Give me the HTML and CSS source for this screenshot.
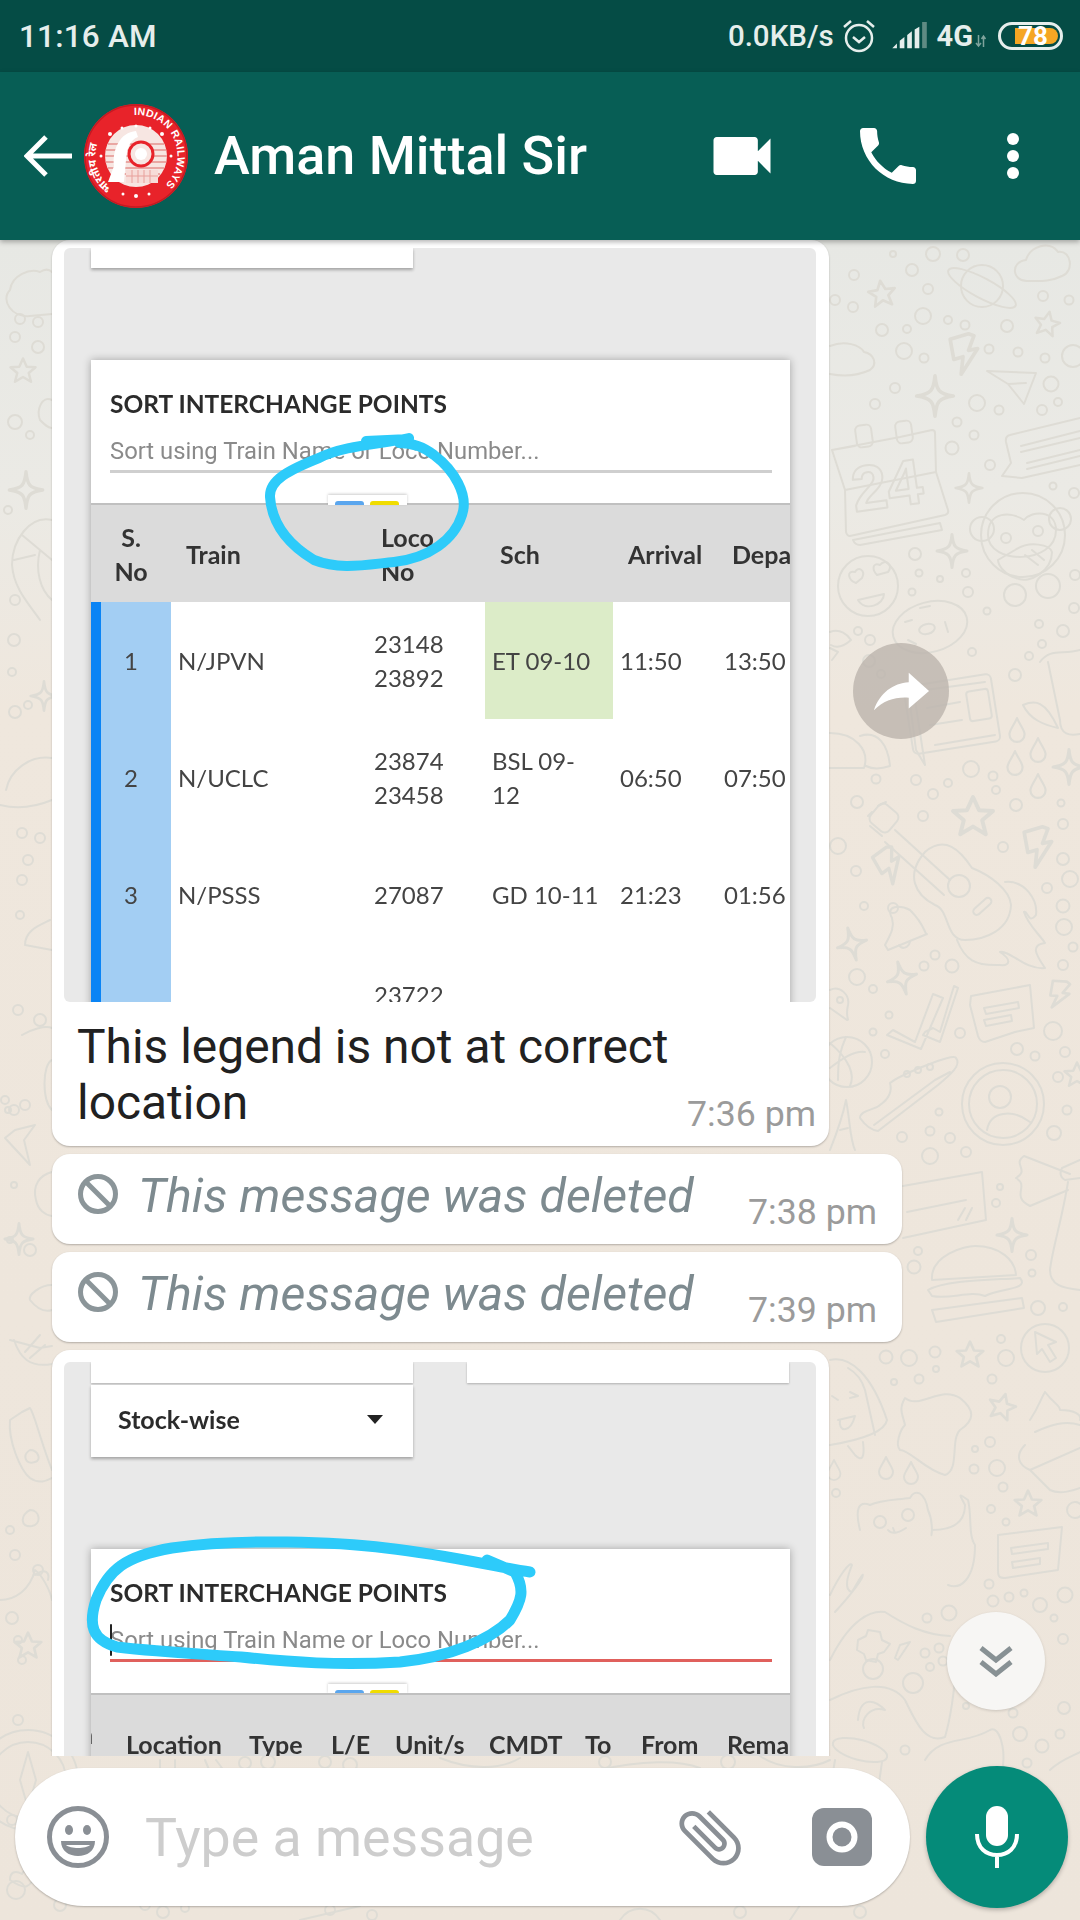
FILE: index.html
```html
<!DOCTYPE html>
<html lang="en">
<head>
<meta charset="utf-8">
<title>Aman Mittal Sir</title>
<link rel="stylesheet" href="styles.css">
</head>
<body>
<svg class="defs" width="0" height="0" aria-hidden="true">
  <defs>
    <symbol id="star" viewBox="-12 -12 24 24" overflow="visible"><path d="M0-10 3-3.4 10-3 4.6 1.6 6.4 8.6 0 4.8-6.4 8.6-4.6 1.6-10-3-3-3.4Z"/></symbol>
    <symbol id="spark" viewBox="-12 -12 24 24" overflow="visible"><path d="M0-11C.8-3 2-1.200 10 0 2 1.200.8 3 0 11-.8 3-2 1.200-10 0-2-1.200-.8-3 0-11Z"/></symbol>
    <symbol id="bolt" viewBox="-12 -12 24 24" overflow="visible"><path d="M3-11-7-8-5 3 0 1.500-1 11 8-3 3-2 6-10Z"/></symbol>
    <symbol id="drop" viewBox="-12 -12 24 24" overflow="visible"><path d="M0-11C3-4 7 0 7 4A7 7 0 0 1-7 4C-7 0-3-4 0-11Z"/></symbol>
  </defs>
</svg>
<main class="screen">
  <div class="status">
    <span class="clock">11:16 AM</span>
    <div class="status-right">
      <span class="speed">0.0KB/s</span>
      <svg class="ico-alarm" viewBox="0 0 34 34"><circle cx="17" cy="19" r="13"/><path d="M11 18l6 5 6-5M2 8l7-6M32 8l-7-6"/></svg>
      <svg class="ico-signal" viewBox="0 0 40 30"><path class="bar" d="M1 28h5v-5zM9 28h5V16l-5 4zM17 28h5V10l-5 4zM25 28h5V5l-5 3z"/><path class="bar-off" d="M33 28h5V0h-5z"/></svg>
      <span class="net">4G</span>
      <svg class="ico-arrows" viewBox="0 0 12 14"><path d="M3.500 1v11M1 9l2.500 3L6 9M8.500 13V2M6.500 5l2-3 2 3"/></svg>
      <div class="battery"><span class="battery-fill"></span><span class="battery-num">78</span></div>
    </div>
  </div>

  <header class="appbar">
    <svg class="ico-back" viewBox="0 0 48 42"><path d="M48 21H4M22 2 3 21l19 19"/></svg>
    <svg class="logo" viewBox="0 0 104 104">
      <circle cx="52" cy="52" r="52" fill="#e8232a"/>
      <circle cx="52" cy="52" r="51" fill="none" stroke="#c41a22" stroke-width="1.500"/>
      <defs>
        <path id="arc-en" d="M50 11A41 41 0 0 1 72 88"/>
        <path id="arc-hi" d="M28 84A40 40 0 0 1 46 12"/>
      </defs>
      <text class="logo-text"><textPath href="#arc-en">INDIAN RAILWAYS</textPath></text>
      <text class="logo-hi"><textPath href="#arc-hi">भारतीय रेल</textPath></text>
      <circle cx="52" cy="52" r="31" fill="#f7e6e2"/>
      <path d="M24 40H80M22 46H82M21 52H83M22 58H82M24 64H80M28 70H76" stroke="#e9a7a3" stroke-width="2"/>
      <path d="M52 27C36 28 28 46 30 62L24 78 40 78 42 56C43 44 46 36 54 33Z" fill="#fff"/>
      <circle cx="57" cy="50" r="12" fill="#f7e6e2" stroke="#e8232a" stroke-width="3"/>
      <circle cx="57" cy="50" r="6" fill="#fff"/>
      <path d="M42 66H74V79H42Z" fill="#f7dcd8"/>
      <path d="M48 66V79M54 66V79M60 66V79M66 66V79M42 72H74" stroke="#e8a09b" stroke-width="1"/>
      <g fill="#fff"><circle cx="26" cy="30" r="2"/><circle cx="78" cy="30" r="2"/><circle cx="87" cy="52" r="1.500"/><circle cx="17" cy="52" r="1.500"/><circle cx="52" cy="92" r="2"/><circle cx="65" cy="90" r="1.500"/><circle cx="39" cy="90" r="1.500"/><circle cx="52" cy="22" r="1.500"/><circle cx="66" cy="24" r="1.500"/><circle cx="38" cy="24" r="1.500"/></g>
    </svg>
    <h1 class="name">Aman Mittal Sir</h1>
    <div class="actions">
      <svg class="ico-video" viewBox="3 6 18 12"><path d="M17 10.500V7c0-.55-.45-1-1-1H4c-.55 0-1 .45-1 1v10c0 .55.45 1 1 1h12c.55 0 1-.45 1-1v-3.500l4 4v-11l-4 4z"/></svg>
      <svg class="ico-phone" viewBox="3 3 18 18"><path d="M6.620 10.790c1.440 2.830 3.760 5.140 6.590 6.590l2.200-2.200c.27-.27.67-.36 1.020-.24 1.120.37 2.330.57 3.570.57.55 0 1 .45 1 1V20c0 .55-.45 1-1 1-9.390 0-17-7.610-17-17 0-.55.45-1 1-1h3.500c.55 0 1 .45 1 1 0 1.250.2 2.450.57 3.570.11.35.03.74-.25 1.020l-2.200 2.200z"/></svg>
      <div class="dots"><i></i><i></i><i></i></div>
    </div>
  </header>

  <section class="chat">
    <svg class="doodles" viewBox="0 240 1080 1680" aria-hidden="true">
      <g class="dc">
        <circle cx="893" cy="254" r="3"/><circle cx="933" cy="254" r="7"/><circle cx="963" cy="255" r="6"/><circle cx="854" cy="275" r="5"/><circle cx="912" cy="270" r="6"/><circle cx="928" cy="289" r="5"/><circle cx="853" cy="307" r="5"/><circle cx="835" cy="300" r="5"/><circle cx="923" cy="316" r="8"/><circle cx="882" cy="330" r="6"/><circle cx="907" cy="329" r="4"/><circle cx="948" cy="320" r="4"/><circle cx="965" cy="325" r="4.500"/><circle cx="1007" cy="326" r="6"/><circle cx="1043" cy="296" r="5"/><circle cx="1069" cy="300" r="4.500"/><circle cx="904" cy="351" r="8"/><circle cx="924" cy="358" r="4.500"/><circle cx="989" cy="349" r="4.500"/><circle cx="1018" cy="352" r="4.500"/><circle cx="1045" cy="358" r="4.500"/><circle cx="1073" cy="356" r="11"/><circle cx="895" cy="388" r="5"/><circle cx="875" cy="404" r="5"/><circle cx="977" cy="403" r="8"/><circle cx="999" cy="410" r="4.500"/><circle cx="1051" cy="384" r="7.500"/><circle cx="1058" cy="402" r="4"/><circle cx="1042" cy="410" r="5"/><circle cx="957" cy="422" r="4.500"/><circle cx="974" cy="435" r="4.500"/><circle cx="952" cy="448" r="6.500"/><circle cx="990" cy="465" r="5"/><circle cx="1053" cy="486" r="3.500"/><circle cx="1074" cy="493" r="5"/><circle cx="915" cy="554" r="6"/><circle cx="919" cy="573" r="3.500"/><circle cx="940" cy="579" r="3"/><circle cx="912" cy="592" r="3.500"/><circle cx="966" cy="573" r="4"/><circle cx="968" cy="592" r="5"/><circle cx="1075" cy="575" r="5"/><circle cx="1074" cy="608" r="5"/><circle cx="987" cy="611" r="3.500"/><circle cx="1039" cy="624" r="4"/><circle cx="1063" cy="631" r="6"/><circle cx="1042" cy="644" r="4"/><circle cx="1029" cy="656" r="4"/><circle cx="972" cy="652" r="4"/><circle cx="1015" cy="675" r="6"/><circle cx="858" cy="631" r="4"/><circle cx="870" cy="640" r="5"/><circle cx="869" cy="661" r="6"/><circle cx="881" cy="674" r="4"/><circle cx="971" cy="769" r="8"/><circle cx="993" cy="776" r="4.500"/><circle cx="996" cy="790" r="4"/><circle cx="916" cy="780" r="5"/><circle cx="948" cy="783" r="4"/><circle cx="876" cy="779" r="4.500"/><circle cx="933" cy="794" r="5"/>
        <circle cx="857" cy="802" r="6"/><circle cx="923" cy="816" r="5"/><circle cx="1016" cy="805" r="6"/><circle cx="1061" cy="803" r="3.500"/><circle cx="1063" cy="824" r="5"/><circle cx="838" cy="846" r="8"/><circle cx="1003" cy="847" r="5"/><circle cx="1063" cy="859" r="6"/><circle cx="856" cy="871" r="5"/><circle cx="1070" cy="879" r="8"/><circle cx="1047" cy="888" r="5"/><circle cx="864" cy="906" r="4"/><circle cx="1063" cy="906" r="6.500"/><circle cx="1064" cy="927" r="8"/><circle cx="1073" cy="947" r="4.500"/><circle cx="935" cy="955" r="4.500"/><circle cx="924" cy="966" r="4.500"/><circle cx="952" cy="966" r="6.500"/><circle cx="1063" cy="965" r="5"/><circle cx="857" cy="977" r="8"/><circle cx="873" cy="989" r="4"/><circle cx="889" cy="1015" r="3.500"/><circle cx="873" cy="1032" r="3.500"/><circle cx="960" cy="1033" r="5"/><circle cx="1053" cy="1031" r="9"/><circle cx="1017" cy="1049" r="6"/><circle cx="1035" cy="1056" r="4.500"/><circle cx="1065" cy="1052" r="5"/><circle cx="885" cy="1054" r="4"/><circle cx="1058" cy="1077" r="5"/><circle cx="939" cy="1112" r="3.500"/><circle cx="1067" cy="1110" r="4.500"/><circle cx="902" cy="1137" r="5"/><circle cx="930" cy="1131" r="4.500"/><circle cx="950" cy="1138" r="5"/><circle cx="1054" cy="1133" r="7"/><circle cx="966" cy="1152" r="5"/><circle cx="930" cy="1156" r="8"/><circle cx="1000" cy="1187" r="3"/><circle cx="996" cy="1203" r="4"/><circle cx="1031" cy="1255" r="5"/><circle cx="1032" cy="1273" r="3.500"/><circle cx="918" cy="1251" r="4"/><circle cx="914" cy="1267" r="6.500"/><circle cx="1038" cy="1308" r="7"/><circle cx="1063" cy="1307" r="4"/>
        <circle cx="886" cy="1357" r="6.500"/><circle cx="909" cy="1358" r="8"/><circle cx="935" cy="1352" r="5.500"/><circle cx="936" cy="1369" r="3"/><circle cx="894" cy="1382" r="3"/><circle cx="919" cy="1379" r="4.500"/><circle cx="1001" cy="1339" r="4"/><circle cx="1006" cy="1358" r="8"/><circle cx="992" cy="1379" r="4.500"/><circle cx="990" cy="1442" r="5"/><circle cx="975" cy="1449" r="3"/><circle cx="974" cy="1469" r="4.500"/><circle cx="997" cy="1468" r="8"/><circle cx="1003" cy="1487" r="4.500"/><circle cx="991" cy="1509" r="4"/><circle cx="1006" cy="1522" r="3.500"/><circle cx="1075" cy="1510" r="8"/><circle cx="836" cy="1493" r="4"/><circle cx="989" cy="1584" r="4.500"/><circle cx="993" cy="1601" r="5.500"/><circle cx="1009" cy="1597" r="4.500"/><circle cx="1024" cy="1593" r="3.500"/><circle cx="1040" cy="1605" r="7"/><circle cx="1065" cy="1595" r="7.500"/><circle cx="1054" cy="1618" r="3.500"/><circle cx="1063" cy="1639" r="5"/><circle cx="927" cy="1618" r="4.500"/><circle cx="949" cy="1613" r="7.500"/><circle cx="873" cy="1669" r="10"/><circle cx="913" cy="1683" r="10"/><circle cx="925" cy="1653" r="4.500"/><circle cx="939" cy="1648" r="4.500"/><circle cx="930" cy="1667" r="4"/><circle cx="943" cy="1661" r="4.500"/><circle cx="1064" cy="1708" r="6"/><circle cx="1013" cy="1713" r="4.500"/><circle cx="966" cy="1706" r="3"/><circle cx="1020" cy="1734" r="7"/><circle cx="1060" cy="1734" r="4.500"/><circle cx="1042" cy="1746" r="6.500"/><circle cx="1027" cy="1763" r="4.500"/><circle cx="905" cy="1750" r="4.500"/>
        <circle cx="20" cy="319" r="5"/><circle cx="38" cy="322" r="5"/><circle cx="15" cy="337" r="5"/><circle cx="38" cy="347" r="6"/><circle cx="15" cy="422" r="7"/><circle cx="30" cy="435" r="4"/><circle cx="8" cy="510" r="4"/><circle cx="15" cy="600" r="5"/><circle cx="14" cy="640" r="6"/><circle cx="12" cy="672" r="4"/><circle cx="15" cy="712" r="6"/><circle cx="28" cy="705" r="4"/><circle cx="22" cy="833" r="5"/><circle cx="40" cy="838" r="5"/><circle cx="28" cy="860" r="5"/><circle cx="22" cy="880" r="5"/><circle cx="20" cy="915" r="4"/><circle cx="18" cy="1010" r="5"/><circle cx="14" cy="1110" r="5"/><circle cx="8" cy="1110" r="3"/><circle cx="5" cy="1100" r="4"/><circle cx="14" cy="1185" r="3"/><circle cx="40" cy="1020" r="6"/><circle cx="25" cy="1105" r="5"/><circle cx="10" cy="1240" r="3"/><circle cx="30" cy="1250" r="6"/><circle cx="10" cy="1530" r="4"/><circle cx="15" cy="1555" r="5"/><circle cx="18" cy="1720" r="5"/><circle cx="12" cy="1820" r="5"/><circle cx="16" cy="1890" r="9"/><circle cx="60" cy="1905" r="6"/><circle cx="38" cy="1570" r="5"/><circle cx="12" cy="1618" r="6"/><circle cx="22" cy="1660" r="4"/><circle cx="18" cy="1640" r="4"/>
        <circle cx="245" cy="1763" r="6"/><circle cx="268" cy="1762" r="7"/><circle cx="325" cy="1762" r="6"/><circle cx="350" cy="1765" r="7"/><circle cx="605" cy="1762" r="6"/><circle cx="728" cy="1762" r="7"/><circle cx="163" cy="1912" r="6"/><circle cx="145" cy="1905" r="5"/><circle cx="185" cy="1908" r="4"/><circle cx="330" cy="1910" r="5"/><circle cx="372" cy="1915" r="5"/><circle cx="740" cy="1912" r="6"/><circle cx="860" cy="1912" r="6"/>
      </g>
      <g class="dl">
        <circle cx="982" cy="286" r="21"/><ellipse cx="982" cy="288" rx="38" ry="10" transform="rotate(28 982 288)"/>
        <path d="M1027 281C1012 281 1010 262 1026 260 1030 246 1050 240 1058 252 1072 250 1074 272 1062 276 1050 282 1040 281 1027 281Z"/>
        <use href="#star" x="866" y="278" width="32" height="32" transform="rotate(-8 882 294)"/>
        <use href="#star" x="1032" y="309" width="30" height="30" transform="rotate(12 1047 324)"/>
        <use href="#bolt" x="941" y="332" width="44" height="44"/>
        <path d="M987 371 1036 373 1024 404 1008 384 987 371ZM1008 384 1026 383"/>
        <use href="#spark" x="913" y="374" width="44" height="44"/>
        <use href="#spark" x="953" y="472" width="32" height="32"/>
        <use href="#spark" x="934" y="533" width="36" height="36"/>
        <path d="M830 346C845 340 860 345 864 352 874 354 878 364 870 370 855 377 840 376 830 374"/>
        <path d="M832 450 855 446M900 437 932 430Q935 430 935 433L936 472 948 510Q949 514 945 515L850 536Q847 536 846 532L845 490 832 450ZM845 490 936 472M853 540 940 523 942 530 860 545Q855 545 853 540Z"/>
        <rect x="856" y="425" width="16" height="22" rx="5" transform="rotate(-8 864 436)"/>
        <rect x="896" y="421" width="16" height="22" rx="5" transform="rotate(-8 904 432)"/>
        <text class="dt" x="852" y="507" transform="rotate(-8 890 490)">24</text>
        <path d="M1080 418 1010 435Q1005 436 1006 442L1011 463 1002 476 1022 478 1080 465M1021 446 1080 431M1021 452 1080 438M1027 463 1080 450M1027 469 1080 456"/>
        <circle cx="1023" cy="535" r="42"/><circle cx="982" cy="529" r="12"/><circle cx="1060" cy="519" r="11"/>
        <path d="M988 535C988 510 1012 512 1024 520 1032 510 1056 510 1056 530 1056 565 988 565 988 535Z"/>
        <circle cx="1006" cy="538" r="5"/><circle cx="1038" cy="531" r="5"/>
        <path d="M998 560 1015 550C1030 540 1050 545 1052 552 1052 570 1030 585 1016 578 1005 575 998 565 998 560ZM1025 555 1038 565M1032 550 1044 560"/>
        <circle cx="1015" cy="595" r="11"/><circle cx="1048" cy="586" r="12"/>
        <circle cx="868" cy="586" r="30"/>
        <path d="M856 583C848 580 846 570 855 572 858 566 866 570 862 578ZM877 575C872 570 872 562 880 565 885 558 894 565 888 572ZM858 600 884 594C884 605 865 612 858 600Z"/>
        <ellipse cx="930" cy="627" rx="38" ry="25" transform="rotate(-15 930 627)"/><ellipse cx="927" cy="629" rx="8" ry="5" transform="rotate(-15 927 629)"/>
        <path d="M905 622 912 620M920 608 930 606M945 622 948 632M908 640 916 644"/>
        <path d="M830 632C840 628 848 635 851 640 842 648 836 648 831 645M830 648 838 652 832 660"/>
        <rect x="908" y="680" width="88" height="68" rx="5" transform="rotate(-9 952 714)"/>
        <rect x="968" y="690" width="22" height="30" rx="3" transform="rotate(-9 979 705)"/>
        <path d="M908 688 916 750 925 765M925 765 915 700M925 690 985 682M927 708 960 702M930 725 962 720M935 745 995 735"/>
        <path d="M1040 662C1050 648 1062 655 1080 650M1048 662 1060 720C1060 735 1070 736 1080 734M1023 705C1030 720 1045 725 1058 728 1045 700 1035 700 1023 705Z"/>
        <use href="#drop" x="1004" y="717" width="26" height="26"/><use href="#drop" x="1025" y="737" width="26" height="26"/><use href="#drop" x="1002" y="750" width="26" height="26"/><use href="#drop" x="1025" y="773" width="26" height="26"/>
        <use href="#spark" x="1050" y="748" width="38" height="38"/>
        <path d="M830 733C855 733 870 750 864 768H830M860 736C878 730 888 745 890 766 878 770 870 768 866 766"/>
        <use href="#star" x="949" y="793" width="48" height="48"/>
        <use href="#bolt" x="1015" y="825" width="44" height="44"/>
        <use href="#bolt" x="868" y="846" width="40" height="40" transform="rotate(-20 888 866)"/>
        <use href="#bolt" x="1042" y="978" width="32" height="32" transform="rotate(20 1058 994)"/>
        <rect x="872" y="806" width="24" height="24" rx="6" transform="rotate(40 884 818)"/>
        <path d="M878 806 886 802M872 812 868 816M870 826 882 836M895 830 950 880M885 842 944 895"/>
        <path d="M925 852C945 835 960 850 972 868 990 875 1010 890 1011 905 1010 930 985 940 965 940 945 940 950 910 935 905 915 895 905 875 925 852Z"/>
        <circle cx="959" cy="886" r="11"/><rect x="971" y="903" width="22" height="7" rx="3.500" transform="rotate(-42 982 906)"/>
        <path d="M1005 882C1025 880 1038 900 1036 915 1028 925 1028 910 1024 912 1028 925 1040 935 1045 943 1030 945 1036 955 1045 968 1025 970 1010 950 1000 952 1012 960 1010 966 1000 965 975 966 965 960 957 940"/>
        <path d="M892 918C885 905 900 905 910 910 925 925 925 935 927 934L888 950 885 945C890 935 895 928 892 918ZM899 945C902 950 908 948 910 942"/><circle cx="893" cy="908" r="5"/>
        <use href="#spark" x="834" y="926" width="36" height="36" transform="rotate(-15 852 944)"/>
        <use href="#spark" x="884" y="960" width="36" height="36" transform="rotate(-15 902 978)"/>
        <path d="M830 990C840 985 850 995 848 1005 845 1018 850 1020 847 1020L830 1008"/><circle cx="840" cy="1000" r="3"/>
        <path d="M887 1035 893 1030 915 1042 933 994 943 998 921 1049ZM925 1032 933 1028 940 1032 954 986 958 988 940 1042 923 1035Z"/>
        <path d="M971 996 1030 985 1034 1028 1015 1032 985 1042Q980 1042 978 1036L970 1005ZM984 1008 1018 1002 1019 1008 986 1014ZM984 1020 1011 1015 1012 1021 986 1026Z"/>
        <circle cx="847" cy="1062" r="25"/><path d="M830 1043C850 1060 855 1075 850 1086M830 1068C840 1060 855 1050 865 1052M838 1080C838 1060 840 1050 846 1037"/>
        <path d="M890 1083C900 1075 955 1052 956 1058 962 1065 950 1075 938 1085L878 1131C870 1130 865 1125 860 1118 860 1110 875 1110 880 1105 890 1098 892 1090 890 1083ZM874 1125 935 1080 950 1072"/>
        <circle cx="907" cy="1074" r="3"/><circle cx="918" cy="1070" r="3"/><circle cx="930" cy="1067" r="3"/>
        <circle cx="1003" cy="1104" r="41"/><circle cx="1003" cy="1104" r="34"/><circle cx="1000" cy="1097" r="11"/><path d="M987 1130C990 1112 1012 1108 1030 1122"/>
        <use href="#star" x="1062" y="1060" width="30" height="30"/>
        <path d="M830 1150C840 1125 845 1105 846 1100 850 1120 850 1140 855 1150M840 1130 848 1128"/>
        <path d="M903 1186 982 1172 986 1220 903 1238M907 1212 966 1200M958 1220 965 1208M966 1220 972 1208"/>
        <path d="M1024 1156 1070 1174M1080 1160 1062 1168Q1058 1176 1065 1180L1080 1178M1024 1156C1012 1164 1030 1170 1016 1178 1030 1186 1010 1196 1030 1206L1068 1190M1068 1182C1062 1220 1052 1250 1050 1270 1050 1285 1062 1288 1080 1290"/>
        <use href="#spark" x="994" y="1217" width="36" height="36"/>
        <path d="M932 1280C930 1255 965 1246 975 1246 1000 1246 1015 1260 1016 1275L932 1280ZM928 1290C945 1280 990 1280 1020 1278 1030 1290 1000 1288 985 1296 970 1290 950 1300 932 1296ZM932 1310 1022 1298 1024 1308 936 1322Z"/>
        <circle cx="1045" cy="1348" r="24"/><path d="M1035 1332 1056 1342 1048 1345 1056 1358 1050 1362 1042 1349 1037 1354Z"/>
        <use href="#star" x="954" y="1339" width="32" height="32"/>
        <use href="#star" x="986" y="1391" width="32" height="32" transform="rotate(15 1002 1407)"/>
        <use href="#star" x="1012" y="1488" width="32" height="32"/>
        <path d="M830 1360C850 1355 872 1375 887 1420 885 1432 860 1440 830 1445M875 1435 865 1390C862 1380 855 1372 848 1368M848 1446 855 1455C862 1462 865 1458 863 1442"/>
        <path d="M832 1396 838 1400M850 1392 858 1396 850 1398M840 1420C838 1432 850 1434 855 1416L838 1420"/>
        <path d="M905 1398C920 1410 940 1385 960 1398 975 1410 975 1420 960 1430 950 1440 960 1470 945 1475 925 1470 910 1450 900 1450 895 1445 900 1430 905 1425 903 1415 898 1410 905 1398Z"/>
        <path d="M1045 1392C1055 1405 1060 1405 1060 1410 1075 1410 1082 1415 1080 1420M1030 1420C1040 1405 1040 1400 1045 1392M1025 1445C1015 1455 1018 1465 1030 1470L1050 1490C1060 1495 1075 1490 1080 1488M1030 1470 1080 1448M1035 1432C1050 1425 1065 1420 1080 1425"/>
        <use href="#drop" x="874" y="1456" width="24" height="24"/><use href="#drop" x="899" y="1461" width="24" height="24"/><use href="#drop" x="823" y="1458" width="22" height="24"/>
        <path d="M860 1530C855 1510 858 1500 870 1505 880 1500 895 1500 910 1498 915 1488 925 1492 928 1510 935 1525 930 1545 932 1530 950 1530 965 1525 965 1505 960 1495 957 1492 968 1500 972 1515 968 1535 975 1545 975 1580 960 1590 948 1585 950 1570 935 1575L910 1580C915 1590 915 1598 905 1596 895 1600 890 1590 893 1580 885 1565 880 1560 865 1555 860 1545 860 1535 860 1530Z"/>
        <circle cx="880" cy="1522" r="6"/><circle cx="908" cy="1515" r="6"/><path d="M888 1530C892 1535 900 1532 906 1528M893 1528 895 1533"/>
        <path d="M998 1535 1062 1527 1058 1570 1005 1578C998 1578 998 1575 998 1570ZM1011 1548 1048 1543 1048 1549 1012 1554ZM1012 1562 1040 1558 1040 1564 1013 1568Z"/>
        <path d="M830 1595C838 1578 850 1560 852 1565 848 1575 843 1590 852 1592 860 1578 865 1570 862 1578 855 1590 846 1600 835 1612"/>
        <path d="M830 1660C850 1620 870 1610 885 1612 905 1625 925 1635 950 1636M830 1700C860 1685 890 1680 905 1700 915 1720 925 1745 945 1737 950 1720 955 1690 955 1670"/>
        <path d="M858 1640 866 1636 868 1630 880 1632 882 1640 890 1644 884 1652 878 1654 876 1662 866 1660 864 1654 857 1650Z"/>
        <path d="M900 1645 910 1642 898 1660 895 1658ZM858 1720C860 1695 875 1700 885 1710 870 1705 860 1720 864 1728"/>
        <ellipse cx="860" cy="1750" rx="28" ry="10" transform="rotate(15 860 1750)"/><path d="M835 1760 830 1790M882 1762 878 1790"/>
        <path d="M925 1760C940 1735 965 1745 990 1730 1000 1725 1005 1750 1003 1765"/>
        <path d="M1050 1770C1060 1760 1075 1755 1080 1752"/>
        <path d="M10 290C12 275 30 268 40 272 46 268 50 270 52 272M10 290C0 300 12 318 30 316L52 314"/>
        <use href="#star" x="8" y="356" width="30" height="30"/>
        <path d="M52 400C42 395 36 410 40 420 45 425 48 428 52 428"/>
        <use href="#spark" x="6" y="470" width="40" height="40"/>
        <path d="M52 520C30 515 12 540 12 565 14 590 30 605 40 620M22 535 52 560M14 560 35 555M52 600C40 590 35 570 40 550"/>
        <use href="#spark" x="28" y="680" width="32" height="32"/>
        <path d="M6 790C10 770 30 755 52 758M0 805C20 810 40 805 52 800"/>
        <path d="M50 920C40 925 25 930 25 945L52 950M22 1035C30 1030 45 1025 52 1028M52 1060C42 1065 42 1100 52 1110"/>
        <path d="M15 1130 35 1125 24 1140 30 1165 5 1138Z"/>
        <path d="M52 1172C40 1175 32 1185 36 1200 38 1210 45 1215 52 1216"/>
        <use href="#spark" x="2" y="1222" width="34" height="34"/>
        <path d="M52 1285C40 1285 28 1295 30 1300 38 1310 46 1312 52 1310M14 1340C20 1358 30 1368 52 1364M10 1340 40 1348 52 1346M25 1352 40 1335M30 1358 45 1345"/>
        <path d="M22 1412 30 1408C35 1415 40 1440 52 1470M10 1420C8 1440 20 1470 30 1478 40 1485 48 1480 52 1478M10 1420 22 1412"/>
        <path d="M30 1450C22 1455 25 1465 35 1462 42 1460 38 1450 30 1450ZM30 1510C20 1515 20 1528 32 1526 42 1524 40 1510 30 1510Z"/>
        <path d="M0 1600C15 1600 30 1590 35 1570 42 1575 50 1590 52 1600M35 1575C45 1568 50 1572 48 1580"/>
        <use href="#star" x="12" y="1630" width="32" height="32"/>
        <circle cx="28" cy="1780" r="50"/><circle cx="28" cy="1780" r="38"/><path d="M28 1752 36 1780 28 1808 20 1780Z"/>
        <path d="M10 1880C25 1890 30 1890 38 1870 30 1868 25 1868 22 1874 15 1870 10 1872 10 1880Z"/>
        <path d="M160 1760V1772H175V1760M205 1760 210 1772 222 1768 216 1760M440 1758C470 1770 500 1770 520 1758M600 1770C640 1760 680 1760 700 1768M760 1756C780 1770 810 1770 830 1760M300 1920 360 1906M620 1920C630 1905 650 1905 660 1920M790 1920 800 1905 850 1905"/>
      </g>
    </svg>

    <div class="messages">
      <article class="bubble bubble-media">
        <div class="shot shot-first">
          <div class="stub"></div>
          <div class="card">
            <div class="card-head card-head-first">
              <div class="card-title">SORT INTERCHANGE POINTS</div>
              <div class="card-input">Sort using Train Name or Loco Number...</div>
            </div>
            <div class="legend"><i class="legend-blue"></i><i class="legend-yellow"></i></div>
            <div class="table table-head">
              <div class="th th-num">S.<br>No</div><div class="th">Train</div><div class="th th-loco">Loco<br>No</div><div class="th">Sch</div><div class="th">Arrival</div><div class="th">Depa</div>
            </div>
            <div class="table row">
              <div class="td td-num">1</div><div class="td">N/JPVN</div><div class="td td-loco">23148<br>23892</div><div class="td td-green">ET 09-10</div><div class="td">11:50</div><div class="td">13:50</div>
            </div>
            <div class="table row">
              <div class="td td-num">2</div><div class="td">N/UCLC</div><div class="td td-loco">23874<br>23458</div><div class="td td-loco">BSL 09-<br>12</div><div class="td">06:50</div><div class="td">07:50</div>
            </div>
            <div class="table row">
              <div class="td td-num">3</div><div class="td">N/PSSS</div><div class="td">27087</div><div class="td">GD 10-11</div><div class="td">21:23</div><div class="td">01:56</div>
            </div>
            <div class="table row">
              <div class="td td-num"></div><div class="td"></div><div class="td td-loco td-pair">23722</div><div class="td"></div><div class="td"></div><div class="td"></div>
            </div>
          </div>
          <svg class="ink" viewBox="64 248 752 754"><path d="M409 438C384 444 344 445 319 458 289 470 269 480 270 497 272 525 289 545 314 560 339 570 364 565 394 562 429 558 454 540 462 515 469 495 454 470 434 455 424 447 414 443 399 443M366 441 409 439"/></svg>
        </div>
        <div class="caption">
          <p class="caption-text">This legend is not at correct<br>location</p>
          <time class="stamp stamp-caption">7:36 pm</time>
        </div>
      </article>

      <article class="bubble bubble-deleted">
        <svg class="ico-ban" viewBox="0 0 40 40"><circle cx="20" cy="20" r="17.500"/><path d="M8 8l24 24"/></svg>
        <p class="deleted-text">This message was deleted</p>
        <time class="stamp stamp-deleted">7:38 pm</time>
      </article>
      <article class="bubble bubble-deleted">
        <svg class="ico-ban" viewBox="0 0 40 40"><circle cx="20" cy="20" r="17.500"/><path d="M8 8l24 24"/></svg>
        <p class="deleted-text">This message was deleted</p>
        <time class="stamp stamp-deleted">7:39 pm</time>
      </article>

      <article class="bubble bubble-media bubble-cut">
        <div class="shot shot-second">
          <div class="top-cards">
            <div class="top-left">
              <div class="stub stub-short"></div>
              <div class="stock"><span>Stock-wise</span><i class="caret"></i></div>
            </div>
            <div class="stub stub-short stub-right"></div>
          </div>
          <div class="card card-second">
            <div class="card-head">
              <div class="card-title">SORT INTERCHANGE POINTS</div>
              <div class="card-input card-input-active">Sort using Train Name or Loco Number...</div>
            </div>
            <div class="legend"><i class="legend-blue"></i><i class="legend-yellow"></i></div>
            <div class="table-head wide">
              <div class="th">Location</div><div class="th">Type</div><div class="th">L/E</div><div class="th">Unit/s</div><div class="th">CMDT</div><div class="th">To</div><div class="th">From</div><div class="th">Rema</div>
              <span class="th-cut">n</span>
            </div>
          </div>
          <svg class="ink ink-second" viewBox="64 1362 752 394"><path class="cursor" d="M111 1625V1655"/><path d="M530 1572C500 1568 450 1555 386 1548 340 1542 240 1538 172 1548 125 1556 108 1570 96 1600 88 1625 92 1640 117 1647 160 1652 200 1654 241 1657 290 1662 340 1666 400 1662 450 1657 490 1640 510 1620 522 1600 525 1590 515 1572L487 1560"/></svg>
        </div>
      </article>
    </div>

    <button class="forward" aria-label="Forward"><svg viewBox="0 0 60 40"><path d="M2 40C8 22 22 12 38 11V1L59 20 38 38V27C24 26 12 30 2 40Z"/></svg></button>
    <button class="scroll" aria-label="Scroll down"><svg viewBox="0 0 34 32"><path d="M2 3 17 15 32 3M2 17 17 29 32 17"/></svg></button>

    <footer class="composer">
      <div class="pill">
        <svg class="ico-emoji" viewBox="0 0 62 62"><circle cx="31" cy="31" r="28.500"/><ellipse class="f" cx="22" cy="24" rx="4" ry="5"/><ellipse class="f" cx="40" cy="24" rx="4" ry="5"/><path class="f" d="M14 35H48C48 45 40 50 31 50S14 45 14 35Z"/><path class="w" d="M19 39H43C41 41 36 42 31 42S21 41 19 39Z"/></svg>
        <span class="placeholder">Type a message</span>
        <svg class="ico-clip" viewBox="0 0 24 24"><path d="M16.500 6v11.500c0 2.210-1.790 4-4 4s-4-1.790-4-4V5c0-1.380 1.120-2.500 2.500-2.500s2.500 1.120 2.500 2.500v10.500c0 .55-.45 1-1 1s-1-.45-1-1V6H10v9.500c0 1.380 1.120 2.500 2.500 2.500s2.500-1.120 2.500-2.500V5c0-2.210-1.790-4-4-4S7 2.790 7 5v12.500c0 3.040 2.460 5.500 5.500 5.500s5.500-2.460 5.500-5.500V6h-1.500z"/></svg>
        <svg class="ico-cam" viewBox="0 0 60 58"><rect width="60" height="58" rx="12" fill="#8a8f95"/><circle cx="30" cy="29" r="12.500" fill="none" stroke="#fff" stroke-width="6"/></svg>
      </div>
      <button class="mic" aria-label="Record"><svg viewBox="0 0 44 62"><rect x="11" y="0" width="22" height="40" rx="11" fill="#fff"/><path d="M2 28C2 42 11 49 22 49S42 42 42 28M22 49V62" fill="none" stroke="#fff" stroke-width="4"/></svg></button>
    </footer>
  </section>
</main>
</body>
</html>
```
FILE: styles.css
```css
* { box-sizing: border-box; }
html, body { margin: 0; padding: 0; }
body { width: 1080px; height: 1920px; overflow: hidden; font-family: Roboto, "Noto Sans", sans-serif; }
.defs { position: absolute; }
.screen { width: 1080px; height: 1920px; display: flex; flex-direction: column; overflow: hidden; }

/* status bar */
.status { height: 72px; flex: none; background: #054c45; color: #e6eeec; display: flex; align-items: center; justify-content: space-between; padding: 0 17px 0 19px; }
.clock { font-size: 31.500px; font-weight: 500; letter-spacing: .2px; }
.status-right { display: flex; align-items: center; }
.speed { font-size: 29.500px; font-weight: 500; }
.ico-alarm { width: 34px; height: 34px; margin-left: 8px; fill: none; stroke: #e6eeec; stroke-width: 2.500; }
.ico-signal { width: 40px; height: 28px; margin-left: 14px; }
.bar { fill: #e6eeec; }
.bar-off { fill: #5f8b83; }
.net { font-size: 29px; font-weight: 700; margin-left: 7px; }
.ico-arrows { width: 12px; height: 14px; margin: 10px 0 0 2px; fill: none; stroke: #7fa39c; stroke-width: 1.500; }
.battery { position: relative; width: 65px; height: 28px; margin-left: 11px; border: 3px solid #e6eeec; border-radius: 14px; }
.battery-fill { position: absolute; left: 14px; top: 3px; width: 43px; height: 16px; background: #f5a623; border-radius: 0 9px 9px 0; }
.battery-num { position: absolute; left: 17px; top: -3px; font-size: 26px; line-height: 28px; font-weight: 700; color: #fff; }

/* app bar */
.appbar { height: 168px; flex: none; background: #075e55; display: flex; align-items: center; padding-left: 24px; position: relative; z-index: 3; box-shadow: 0 2px 5px rgba(0,0,0,.3); }
.ico-back { width: 48px; height: 42px; fill: none; stroke: #fff; stroke-width: 5; flex: none; }
.logo { width: 104px; height: 104px; margin-left: 12px; flex: none; }
.logo-text { font: 700 10.500px "Liberation Sans", sans-serif; fill: #fff; letter-spacing: .4px; }
.logo-hi { font: 700 11px "Noto Sans", "Noto Sans CJK SC", sans-serif; fill: #fff; }
.name { margin: 0 0 0 26px; font-size: 53.900px; font-weight: 500; color: #fff; line-height: 60px; white-space: nowrap; }
.actions { margin-left: auto; display: flex; align-items: center; padding-right: 61px; }
.ico-video { width: 64px; height: 38px; fill: #fff; }
.ico-phone { width: 56px; height: 56px; fill: #fff; margin-left: 86px; }
.dots { display: flex; flex-direction: column; gap: 5px; margin-left: 91px; }
.dots i { display: block; width: 12px; height: 12px; border-radius: 50%; background: #fff; }

/* chat */
.chat { flex: 1; min-height: 0; position: relative; display: flex; flex-direction: column; background: linear-gradient(#e7e8e4 0, #ebeae5 250px, #efe7dd 470px, #ede5db 100%); }
.doodles { position: absolute; inset: 0; width: 1080px; height: 1680px; }
.doodles .dc, .doodles .dl { fill: none; stroke: #dedcd5; stroke-width: 2; stroke-linecap: round; stroke-linejoin: round; }
.doodles use { fill: none; vector-effect: non-scaling-stroke; }
.dt { font: 700 64px "Liberation Sans", sans-serif; }
.messages { height: 1516px; flex: none; overflow: hidden; padding: 0 0 0 52px; display: flex; flex-direction: column; gap: 8px; position: relative; }
.bubble { background: #fff; border-radius: 18px; box-shadow: 0 1px 2px rgba(0,0,0,.25); flex: none; }
.bubble-media { width: 777px; padding: 8px 12px 0; }
.bubble-cut { padding-top: 12px; height: 480px; }

.shot { position: relative; width: 752px; background: #e9e9e9; border-radius: 6px 6px 0 0; overflow: hidden; font-family: Lato, sans-serif; color: #333; filter: blur(.35px); }
.shot-first { height: 754px; border-radius: 6px; }
.shot-second { height: 460px; }
.stub { width: 322px; height: 20px; margin-left: 27px; background: #fff; box-shadow: 0 2px 3px rgba(0,0,0,.3); }
.card { position: relative; width: 699px; margin: 92px 0 0 27px; background: #fff; box-shadow: 0 0 8px rgba(0,0,0,.3); }
.card-head { height: 144px; padding: 30px 18px 0 19px; }
.card-head-first { height: 143px; }
.card-title { font-size: 24.500px; line-height: 28px; font-weight: 700; color: #2b2b2b; white-space: nowrap; }
.card-input { margin-top: 19px; font: 400 23.800px/28px Roboto, sans-serif; color: #8a8a8a; height: 36px; border-bottom: 3px solid #cfcfcf; white-space: nowrap; }
.card-input-active { border-bottom-color: #e0605c; }
.legend { position: absolute; left: 237px; top: 135px; width: 79px; height: 10px; background: #fff; box-shadow: 0 -1px 3px rgba(0,0,0,.2); }
.legend-blue, .legend-yellow { position: absolute; top: 6px; height: 4px; width: 29px; border-radius: 3px 3px 0 0; }
.legend-blue { left: 7px; background: #5aa6ee; }
.legend-yellow { left: 42px; background: #f0dc00; }
.table { display: grid; grid-template-columns: 80px 196px 118px 128px 104px 1fr; }
.table-head { background: #dbdbdb; height: 99px; align-items: center; border-top: 2px solid #c0c0c0; }
.th { padding-left: 15px; font-size: 25px; line-height: 34px; font-weight: 700; color: #333; white-space: nowrap; }
.th-num { text-align: center; padding-left: 0; }
.th-loco { padding-left: 14px; }
.row { height: 117px; }
.td { padding-left: 7px; font-size: 24px; line-height: 34px; color: #444; display: flex; align-items: center; white-space: nowrap; }
.td-num { background: #a3cef3; border-left: 10px solid #0a84f5; justify-content: center; padding: 0 10px 0 0; }
.td-loco { display: block; align-self: center; }
.td-pair { height: 68px; }
.td-green { background: #dcecc8; }
.ink { position: absolute; left: 0; top: 0; width: 752px; height: 754px; fill: none; stroke: #2dcbfa; stroke-width: 10; stroke-linecap: round; stroke-linejoin: round; }
.ink-second { height: 394px; stroke-width: 11; }
.ink .cursor { stroke: #222; stroke-width: 2; }

.caption { display: flex; justify-content: space-between; align-items: flex-end; padding: 17px 1px 15px 13px; }
.caption-text { margin: 0; font-size: 47.900px; line-height: 56px; color: #212121; white-space: nowrap; }
.stamp { font-size: 35.700px; line-height: 40px; color: #9b9b9b; white-space: nowrap; }
.stamp-caption { margin-bottom: -3px; }

.bubble-deleted { width: 850px; height: 90px; display: flex; align-items: flex-start; padding: 20px 25px 0 26px; }
.ico-ban { width: 40px; height: 40px; fill: none; stroke: #8b9599; stroke-width: 5; flex: none; }
.deleted-text { margin: -8px 0 0 20px; font-size: 48.400px; line-height: 60px; font-style: italic; color: #7d8a8f; white-space: nowrap; }
.stamp-deleted { margin: 18px 0 0 auto; }

.top-cards { display: flex; gap: 54px; margin-left: 27px; }
.top-left { width: 322px; }
.top-cards .stub { margin-left: 0; height: 21px; box-shadow: 0 1px 2px rgba(0,0,0,.25); }
.stock { height: 72px; margin-top: 2px; background: #fff; display: flex; align-items: center; justify-content: space-between; padding: 0 30px 4px 27px; font-size: 25px; font-weight: 700; color: #2b2b2b; box-shadow: 0 2px 3px rgba(0,0,0,.3); }
.caret { width: 0; height: 0; border: 8px solid transparent; border-top: 9px solid #222; border-bottom: 0; }
.stub-right { width: 322px; }
.card-second { margin-top: 92px; overflow: visible; }
.wide { display: grid; grid-template-columns: 123px 82px 64px 94px 96px 56px 86px 1fr; padding-left: 35px; height: 99px; align-items: flex-start; padding-top: 32px; position: relative; overflow: hidden; }
.wide .th { padding-left: 0; }
.th-cut { position: absolute; left: -12px; top: 22px; font-size: 25px; line-height: 34px; font-weight: 700; color: #333; }

/* floating */
.forward { position: absolute; left: 853px; top: 403px; width: 96px; height: 96px; border: 0; border-radius: 50%; background: rgba(188,180,172,.8); display: flex; align-items: center; justify-content: center; padding: 0; }
.forward svg { width: 58px; height: 40px; fill: #fff; }
.scroll { position: absolute; left: 947px; top: 1372px; width: 98px; height: 98px; border: 0; border-radius: 50%; background: #f7f6f4; box-shadow: 0 1px 3px rgba(0,0,0,.15); display: flex; align-items: center; justify-content: center; padding: 0; }
.scroll svg { width: 34px; height: 32px; fill: none; stroke: #889194; stroke-width: 5; }

/* composer */
.composer { flex: 1; position: relative; display: flex; align-items: flex-start; padding: 10px 12px 0 15px; gap: 16px; }
.pill { width: 895px; height: 138px; margin-top: 2px; background: #fff; border-radius: 69px; display: flex; align-items: center; padding-left: 32px; box-shadow: 0 1px 2px rgba(0,0,0,.25); }
.ico-emoji { width: 62px; height: 62px; flex: none; }
.ico-emoji circle { fill: none; stroke: #8a8f95; stroke-width: 5; }
.ico-emoji .f { fill: #8a8f95; }
.ico-emoji .w { fill: #fff; }
.placeholder { margin-left: 36px; font-size: 53.700px; color: #cdcdcd; white-space: nowrap; }
.ico-clip { width: 76px; height: 76px; fill: #8a8f95; margin-left: auto; transform: rotate(-45deg); flex: none; }
.ico-cam { width: 60px; height: 58px; margin: 0 38px 0 64px; flex: none; }
.mic { width: 142px; height: 142px; border: 0; border-radius: 50%; background: #058b79; display: flex; align-items: center; justify-content: center; padding: 0; box-shadow: 0 2px 4px rgba(0,0,0,.25); flex: none; }
.mic svg { width: 44px; height: 62px; }
```
